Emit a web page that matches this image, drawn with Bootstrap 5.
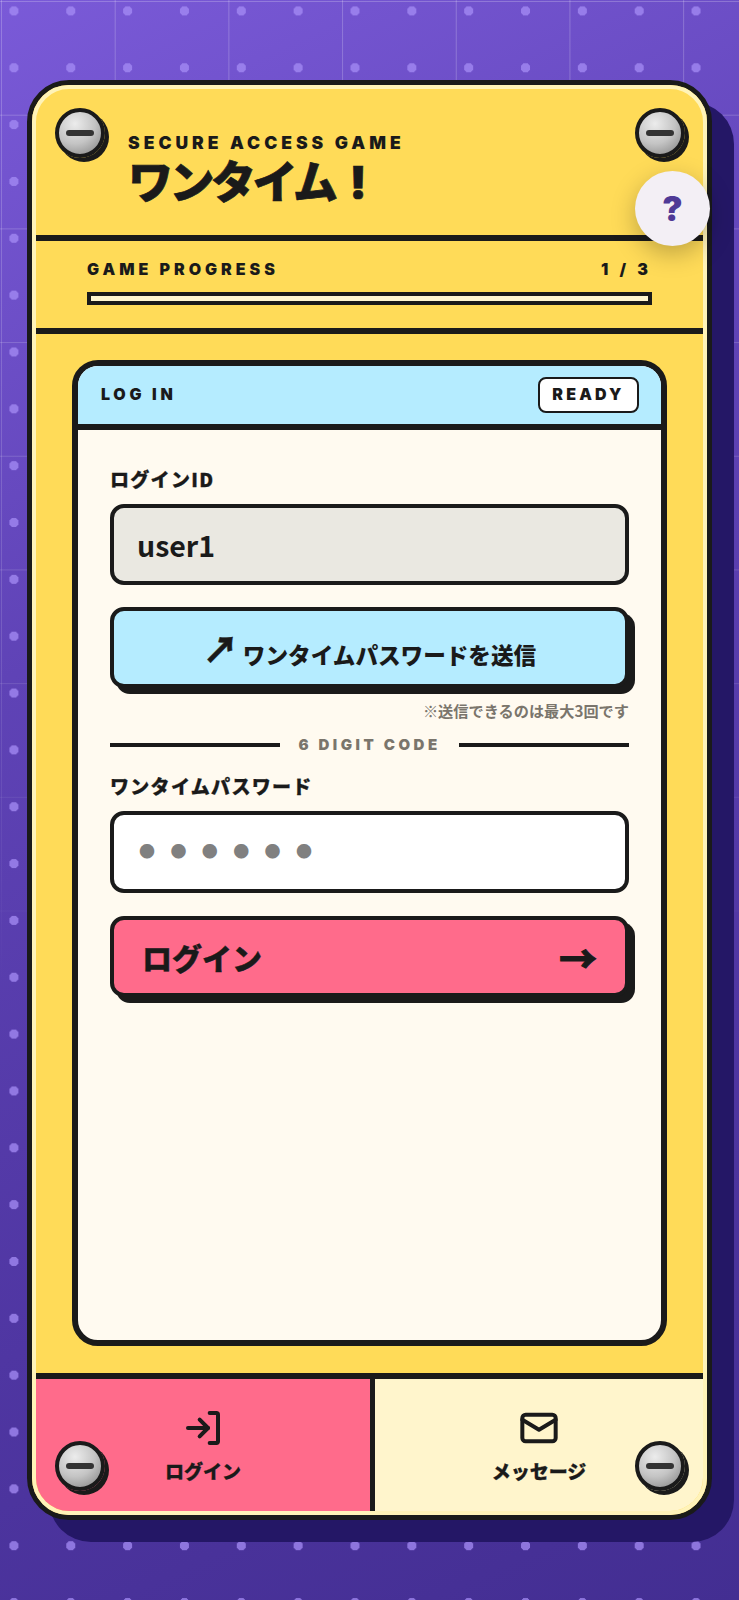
<!DOCTYPE html>
<html lang="ja">
<head>
  <meta charset="UTF-8">
  <meta name="viewport" content="width=device-width, initial-scale=1.0">
  <title>ワンタイム!</title>
  <link href="https://cdn.jsdelivr.net/npm/bootstrap@5.3.0/dist/css/bootstrap.min.css" rel="stylesheet">
  <style>
    :root { --ink: #1a1a1a; --yellow: #ffdb58; --sky: #b5ecff; --pink: #ff6b8b; --paper: #fffaf0; }
    html, body { margin: 0; height: 1600px; overflow: hidden; }
    body {
      position: relative;
      padding: 80px 27px;
      color: var(--ink);
      font-family: "Noto Sans CJK JP", "Noto Sans", sans-serif;
      background-color: #5a3fb0;
      background-image:
        radial-gradient(circle, rgba(165,140,245,.75) 4.5px, transparent 5px),
        linear-gradient(155deg, #7a5ad8 0%, #5f43b6 35%, #4f36a2 70%, #432e92 100%);
      background-size: 56.85px 56.85px, 100% 100%;
      background-position: -14.5px -17.5px, 0 0;
    }
    /* grid lines fade out toward the bottom */
    body::before {
      content: "";
      position: absolute;
      inset: 0;
      background-image:
        linear-gradient(rgba(255,255,255,.22) 1px, transparent 1px),
        linear-gradient(90deg, rgba(255,255,255,.22) 1px, transparent 1px);
      background-size: 113.7px 113.7px;
      background-position: 0 1px, 1px 0;
      -webkit-mask-image: linear-gradient(to bottom, #000 0, rgba(0,0,0,.6) 40%, transparent 62%);
      mask-image: linear-gradient(to bottom, #000 0, rgba(0,0,0,.6) 40%, transparent 62%);
    }
    .game-shell {
      position: relative;
      width: 685px;
      height: 1440px;
      border: 5px solid var(--ink);
      border-radius: 42px;
      background: var(--yellow);
      box-shadow: 22px 22px 0 #241766;
    }
    .game-inner {
      height: 100%;
      border: 4px solid #fff3b8;
      border-radius: 37px;
      overflow: hidden;
    }
    .latin-heavy { font-family: "Inter", "Liberation Sans", sans-serif; font-weight: 900; }
    .game-head { height: 152px; padding: 44px 0 0 92px; border-bottom: 6px solid var(--ink); }
    .game-kicker { font-size: 17.5px; letter-spacing: 4px; line-height: 20px; }
    .game-title { font-size: 45px; font-weight: 900; line-height: 54px; letter-spacing: -3.5px; margin: 0; -webkit-text-stroke: .7px var(--ink); }
    .game-title span { font-family: "Inter", sans-serif; letter-spacing: 0; margin-left: 15px; }
    .game-progress { height: 93px; padding: 16px 51px 0; border-bottom: 6px solid var(--ink); }
    .progress-label { font-size: 16px; letter-spacing: 4px; line-height: 24px; }
    .progress-track { height: 13px; margin-top: 11px; border: 4px solid var(--ink); background: #fff6cf; }
    .game-main { height: 1040px; padding: 26px 36px 27px; }
    .login-panel { height: 100%; border: 6px solid var(--ink); border-radius: 26px; background: var(--paper); overflow: hidden; }
    .panel-head { height: 64px; padding: 0 22px 0 23px; background: var(--sky); border-bottom: 6px solid var(--ink); }
    .panel-title { font-size: 16px; letter-spacing: 3.7px; margin-bottom: 2px; }
    .ready-tag { width: 101px; height: 36px; padding-bottom: 1px; border: 2px solid var(--ink); border-radius: 8px; background: #fff; font-size: 16px; letter-spacing: 3.2px; }
    .panel-body { padding: 35px 32px 28px; }
    .field-label { display: block; margin: 0 0 11px; font-size: 19px; font-weight: 900; line-height: 28px; letter-spacing: 1.3px; -webkit-text-stroke: .3px var(--ink); }
    .game-input {
      display: block; width: 100%; height: 81px; padding: 0 23px;
      border: 4px solid var(--ink); border-radius: 14px;
      color: var(--ink); font-size: 28.5px; font-weight: 700; outline: 0;
    }
    .game-input[readonly] { background: #eae8e1; }
    .otp-input { height: 82px; padding: 0 23px 3px 25px; font-size: 16px; }
    .otp-input::placeholder { color: #808080; opacity: 1; letter-spacing: 15.4px; }
    .game-btn {
      display: flex; align-items: center; width: 100%; height: 81px;
      border: 4px solid var(--ink); border-radius: 14px;
      box-shadow: 6px 6px 0 var(--ink);
      color: var(--ink); font-weight: 900;
    }
    .send-btn { margin-top: 22px; padding-top: 22px; justify-content: center; gap: 4px; background: var(--sky); font-size: 22.6px; }
    .send-btn .btn-arrow { font-size: 36px; line-height: 1; margin-top: -16px; -webkit-text-stroke: .5px var(--ink); }
    .send-note { margin: 11px 0 0; text-align: right; color: #7a756c; font-size: 15.2px; font-weight: 700; line-height: 22px; }
    .code-divider { margin-top: 13px; gap: 18px; color: #7a756c; font-size: 15px; letter-spacing: 3.5px; line-height: 22px; }
    .code-divider::before, .code-divider::after { content: ""; flex: 1; height: 4px; background: var(--ink); }
    .otp-label { margin-top: 16px; }
    .login-btn { margin-top: 23px; justify-content: space-between; padding: 2px 28px 0; background: var(--pink); font-size: 30px; -webkit-text-stroke: .4px var(--ink); }
    .login-btn .btn-arrow { font-size: 38px; line-height: 1; -webkit-text-stroke: 1px var(--ink); }
    .game-tabs { height: 138px; border-top: 6px solid var(--ink); }
    .game-tab { padding-top: 29px; font-size: 19px; font-weight: 900; line-height: 28px; text-align: center; -webkit-text-stroke: .3px var(--ink); }
    .game-tab svg { display: block; margin: 0 auto 9px; }
    .tab-login { width: 339px; background: var(--pink); border-right: 5px solid var(--ink); }
    .tab-message { flex: 1 1 0; background: #fff5cc; }
    .metal-screw {
      position: absolute; width: 50px; height: 50px;
      border: 4px solid var(--ink); border-radius: 50%;
      background: radial-gradient(circle at 38% 28%, #ececec 0%, #c4c4c4 50%, #7f7f7f 100%);
      box-shadow: 4px 4px 0 var(--ink);
    }
    .metal-screw::after {
      content: ""; position: absolute; left: 7px; right: 7px; top: 18px; height: 6px;
      border-radius: 3px; background: #333;
    }
    .screw-tl { left: 23px; top: 23px; }
    .screw-tr { right: 22px; top: 23px; }
    .screw-bl { left: 23px; bottom: 24px; }
    .screw-br { right: 22px; bottom: 24px; }
    .help-btn {
      position: absolute; right: -3px; top: 86px; width: 75px; height: 75px; padding: 0;
      border: 0; border-radius: 50%;
      background: #f3eff5; color: #4f3a96;
      box-shadow: 0 8px 24px rgba(0,0,0,.25);
      font-size: 34px;
    }
  </style>
</head>
<body>

  <div class="game-shell">
    <div class="game-inner d-flex flex-column">

      <!-- header -->
      <header class="game-head">
        <div class="game-kicker latin-heavy">SECURE ACCESS GAME</div>
        <h1 class="game-title">ワンタイム<span>!</span></h1>
      </header>

      <!-- progress -->
      <section class="game-progress">
        <div class="d-flex justify-content-between progress-label latin-heavy">
          <span>GAME PROGRESS</span>
          <span>1 / 3</span>
        </div>
        <div class="progress-track"></div>
      </section>

      <!-- login panel -->
      <main class="game-main">
        <div class="login-panel">
          <div class="panel-head d-flex justify-content-between align-items-center">
            <span class="panel-title latin-heavy">LOG IN</span>
            <span class="ready-tag latin-heavy d-flex justify-content-center align-items-center">READY</span>
          </div>
          <form class="panel-body">
            <label class="field-label" for="loginId">ログインID</label>
            <input id="loginId" class="game-input" type="text" value="user1" readonly>
            <button type="button" class="btn game-btn send-btn"><span class="btn-arrow">↗</span><span>ワンタイムパスワードを送信</span></button>
            <p class="send-note">※送信できるのは最大3回です</p>
            <div class="code-divider d-flex align-items-center latin-heavy">6 DIGIT CODE</div>
            <label class="field-label otp-label" for="otp">ワンタイムパスワード</label>
            <input id="otp" class="game-input otp-input" type="text" placeholder="●●●●●●">
            <button type="button" class="btn game-btn login-btn"><span>ログイン</span><span class="btn-arrow">→</span></button>
          </form>
        </div>
      </main>

      <!-- tabs -->
      <nav class="game-tabs d-flex">
        <div class="game-tab tab-login">
          <svg width="40" height="40" viewBox="0 0 24 24" fill="none" stroke="#1a1a1a" stroke-width="2.4" stroke-linecap="round" stroke-linejoin="round"><path d="M16 3h4a1 1 0 0 1 1 1v16a1 1 0 0 1-1 1h-4"/><path d="M10 17l5-5-5-5"/><path d="M15 12H3"/></svg>
          ログイン
        </div>
        <div class="game-tab tab-message">
          <svg width="40" height="40" viewBox="0 0 24 24" fill="none" stroke="#1a1a1a" stroke-width="2.4" stroke-linecap="round" stroke-linejoin="round"><rect x="2" y="4" width="20" height="16" rx="2"/><path d="M2 7l10 6 10-6"/></svg>
          メッセージ
        </div>
      </nav>
    </div>

    <span class="metal-screw screw-tl"></span>
    <span class="metal-screw screw-tr"></span>
    <span class="metal-screw screw-bl"></span>
    <span class="metal-screw screw-br"></span>
    <button type="button" class="help-btn latin-heavy">?</button>
  </div>

</body>
</html>
